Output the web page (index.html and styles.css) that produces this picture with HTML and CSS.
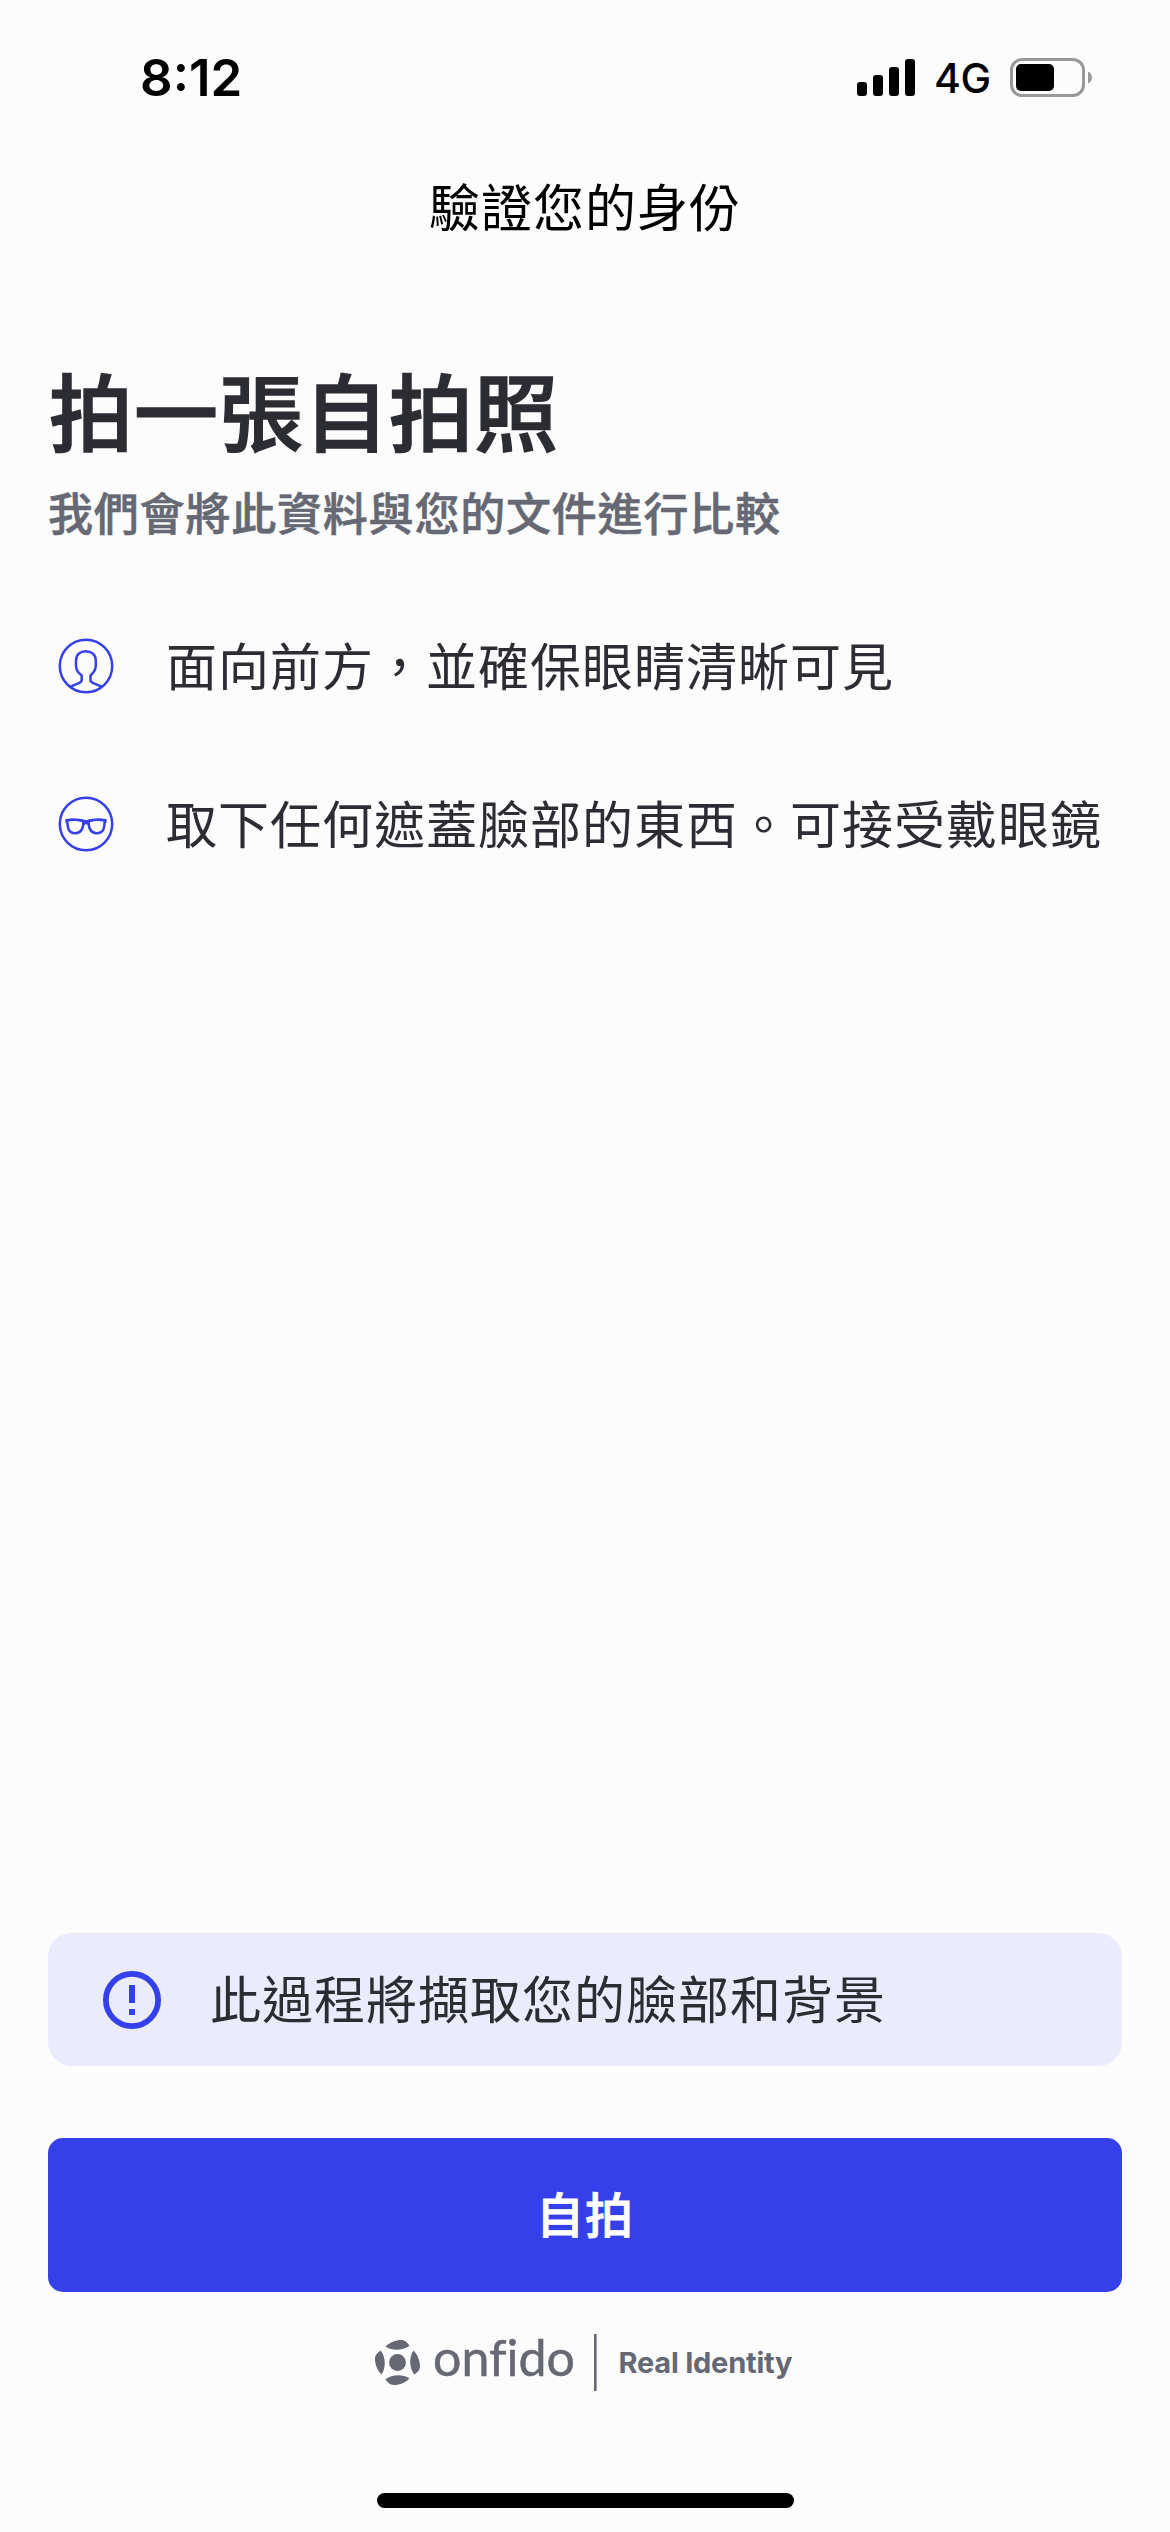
FILE: index.html
```html
<!DOCTYPE html>
<html lang="zh-Hant">

<head>
    <meta charset="UTF-8">
    <meta name="viewport" content="width=device-width, initial-scale=1.0">
    <title>驗證您的身份</title>

    <link rel="stylesheet" href="styles.css">
</head>

<body>
    <div class="main">
        <div class="statusBar">
            <span class="time">8:12</span>
            <div class="status-right">
                <svg class="signal" width="58" height="37" viewBox="0 0 58 37">
                    <rect x="0" y="23" width="10" height="14" rx="3" />
                    <rect x="16" y="16" width="10" height="21" rx="3" />
                    <rect x="32" y="8" width="10" height="29" rx="3" />
                    <rect x="48" y="0" width="10" height="37" rx="3" />
                </svg>
                <span class="network">4G</span>
                <svg class="battery" width="82" height="39" viewBox="0 0 82 39">
                    <rect x="1.5" y="1.5" width="72" height="36" rx="10.5" fill="none" stroke="#999" stroke-width="3" />
                    <rect x="6" y="6" width="38" height="27" rx="5" />
                    <path d="M78 13.5 C83.3 15.5 83.3 23.5 78 25.5 Z" fill="#999" />
                </svg>
            </div>
        </div>

        <div class="navBar">驗證您的身份</div>

        <div class="content">
            <h1>拍一張自拍照</h1>
            <h2>我們會將此資料與您的文件進行比較</h2>
            <ul class="tips">
                <li>
                    <svg class="tip-icon" width="56" height="56" viewBox="0 0 56 56">
                        <circle cx="28" cy="28" r="26.2" />
                        <path d="M12.5 49 C17 45.8 23.7 45.5 23.7 42.2 V37.5 C20.5 34.8 18 32.8 18 27.5 V22.5 C18 16.5 22.3 13.2 27.8 13.2 S37.8 16.5 37.8 22.5 V27.5 C37.8 32.8 35.3 34.8 32.5 37.5 V42.2 C32.5 45.5 39 45.8 43.5 49" />
                    </svg>
                    <span>面向前方，並確保眼睛清晰可見</span>
                </li>
                <li>
                    <svg class="tip-icon" width="56" height="56" viewBox="0 0 56 56">
                        <circle cx="28" cy="28" r="26.2" />
                        <path d="M9.2 24.5 C13 23.2 21 23.5 25.5 24.8 C25.5 32 23 37.2 17.5 37.2 C10.5 37.2 9.8 33.5 9.2 24.5 Z" />
                        <path d="M46.8 24.5 C43 23.2 35 23.5 30.5 24.8 C30.5 32 33 37.2 38.5 37.2 C45.5 37.2 46.2 33.5 46.8 24.5 Z" />
                        <path class="fill" d="M7.4 23 Q17 21.6 25 24 H31 Q39 21.6 48.6 23 V26.5 L46.5 28 V25.2 Q38 23.8 31.2 26.2 L30 29 Q28 27.3 26 29 L24.8 26.2 Q18 23.8 9.5 25.2 V28 L7.4 26.5 Z" />
                    </svg>
                    <span>取下任何遮蓋臉部的東西。可接受戴眼鏡</span>
                </li>
            </ul>
        </div>

        <div class="bottom">
            <div class="alert">
                <svg width="58" height="58" viewBox="0 0 58 58">
                    <circle cx="29" cy="29" r="26.1" fill="none" stroke="#353fea" stroke-width="5.8" />
                    <path d="M26 14 H32 V32 H26 Z M26 38 H32 V44 H26 Z" fill="#353fea" />
                </svg>
                <span>此過程將擷取您的臉部和背景</span>
            </div>
            <div class="btn">自拍</div>
            <div class="brand">
                <svg width="420" height="90" viewBox="0 -15 420 90">
                    <circle cx="22.5" cy="29.5" r="8.4" />
                    <path id="petal" d="M10.5 13.5 C15.5 8.5 22 7 26 7 C30.5 7 32 9.5 34.6 12.7 C27.5 18 17 18 10.5 13.5 Z" />
                    <use href="#petal" transform="rotate(90 22.5 29.5)" />
                    <use href="#petal" transform="rotate(180 22.5 29.5)" />
                    <use href="#petal" transform="rotate(270 22.5 29.5)" />
                    <text class="logo-name" x="58" y="42.5" textLength="142" lengthAdjust="spacingAndGlyphs">onfido</text>
                    <rect x="219" y="1" width="2.6" height="57" />
                    <text class="logo-slogan" x="243.5" y="40" textLength="174">Real Identity</text>
                </svg>
            </div>
        </div>

        <div class="homeBar"></div>
    </div>
</body>

</html>
```

FILE: styles.css
```css
* {
    box-sizing: border-box;
}

body {
    margin: 0;
    font-family: "Noto Sans CJK TC", sans-serif;
    background-color: #fcfcfd;
    color: #2c2d33;
}

.main {
    width: 100%;
    height: 100vh;
    display: flex;
    flex-direction: column;
}

.statusBar {
    height: 155px;
    padding: 0 78px 0 140px;
    display: flex;
    justify-content: space-between;
    align-items: center;
    color: black;
    font-family: Inter, "Liberation Sans", sans-serif;
}

.time {
    font-size: 51px;
    font-weight: 600;
}

.status-right {
    display: flex;
    align-items: center;
}

.network {
    width: 57px;
    margin: 0 19px 0 19px;
    font-size: 41px;
    font-weight: 500;
    letter-spacing: -0.5px;
}

.navBar {
    height: 104px;
    line-height: 100px;
    text-align: center;
    color: black;
    font-size: 51px;
    letter-spacing: 1px;
}

.content {
    flex: 1;
    padding: 90px 48px 0;
}

h1 {
    margin: 0 0 0 1px;
    font-size: 84px;
    line-height: 120px;
    font-weight: 500;
    letter-spacing: 1px;
    -webkit-text-stroke: 1.5px #2c2d33;
}

h2 {
    margin: 9px 0 0;
    font-size: 45px;
    line-height: 68px;
    font-weight: 500;
    letter-spacing: 0.8px;
    color: #666973;
    -webkit-text-stroke: 0.6px #666973;
}

.tips {
    margin: 80px 0 0;
    padding: 0 0 0 10px;
    list-style: none;
    font-size: 51px;
    letter-spacing: 1px;
}

.tips li {
    height: 80px;
    margin-bottom: 78px;
    display: flex;
    align-items: center;
    gap: 52px;
    white-space: nowrap;
}

.tips span,
.alert span {
    padding-bottom: 5px;
}

.tip-icon {
    fill: none;
    stroke: #353fea;
    stroke-width: 2.5;
}

.tip-icon .fill {
    fill: #353fea;
    stroke: none;
}

.bottom {
    padding: 0 48px;
}

.alert {
    height: 133px;
    padding-left: 55px;
    display: flex;
    align-items: center;
    gap: 49px;
    background-color: #ebebfe;
    border-radius: 24px;
    font-size: 51px;
    letter-spacing: 1px;
}

.btn {
    height: 154px;
    margin-top: 72px;
    line-height: 149px;
    text-align: center;
    background-color: #353fea;
    border-radius: 15px;
    color: white;
    font-size: 48px;
    font-weight: 500;
    letter-spacing: 1px;
    -webkit-text-stroke: 0.8px white;
}

.brand {
    height: 201px;
    padding-top: 26px;
    display: flex;
    justify-content: center;
    fill: #666973;
}

.logo-name {
    font-family: Lato, sans-serif;
    font-size: 51px;
    font-variant-ligatures: none;
    stroke: #666973;
    stroke-width: 0.5px;
}

.logo-slogan {
    font-family: Inter, sans-serif;
    font-size: 29px;
    font-weight: 700;
}

.homeBar {
    width: 417px;
    height: 15px;
    margin: 0 auto 24px;
    background-color: black;
    border-radius: 8px;
}
```
